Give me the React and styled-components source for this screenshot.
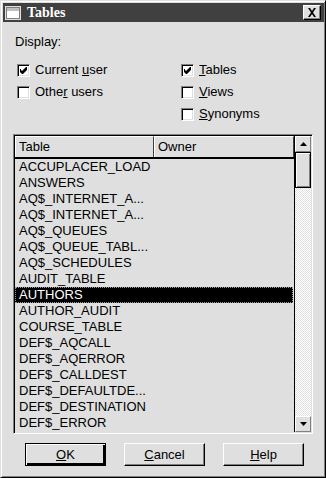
import React from "react";
import styled, { createGlobalStyle } from "styled-components";

const GlobalStyle = createGlobalStyle`
  html, body { margin: 0; padding: 0; background: #dfdfdf; }
  body { font-family: "Liberation Sans", Arial, sans-serif; font-size: 13px; }
  * { box-sizing: border-box; }
`;

const rows = [
  "ACCUPLACER_LOAD", "ANSWERS", "AQ$_INTERNET_A...", "AQ$_INTERNET_A...",
  "AQ$_QUEUES", "AQ$_QUEUE_TABL...", "AQ$_SCHEDULES", "AUDIT_TABLE",
  "AUTHORS", "AUTHOR_AUDIT", "COURSE_TABLE", "DEF$_AQCALL", "DEF$_AQERROR",
  "DEF$_CALLDEST", "DEF$_DEFAULTDE...", "DEF$_DESTINATION", "DEF$_ERROR",
];

function CheckBox({ checked }) {
  return (
    <Box>
      {checked && (
        <svg width="9" height="9" viewBox="0 0 9 9">
          <path d="M1 3v3l2 2h1l4-4V1h-1L3 5 2 4V3z" fill="#000" />
        </svg>
      )}
    </Box>
  );
}

function Arrow({ down }) {
  return (
    <svg width="7" height="4" viewBox="0 0 7 4">
      <path d={down ? "M0 0h7L3.5 4z" : "M3.5 0L7 4H0z"} fill="#000" />
    </svg>
  );
}

export default function App() {
  return (
    <>
      <GlobalStyle />
      <Window>
        <TitleBar>
          <svg width="16" height="14" viewBox="0 0 16 14">
            <rect x="0.5" y="0.5" width="15" height="13" fill="#fff" stroke="#dfdfdf" />
            <rect x="1.5" y="1.5" width="13" height="11" fill="#fff" stroke="#808080" />
            <rect x="2" y="2" width="12" height="3" fill="#c0c0c0" />
          </svg>
          <Title>Tables</Title>
          <CloseButton>
            <svg width="10" height="9" viewBox="0 0 10 9">
              <path d="M1 0h2l2 3 2-3h2L6 4.5 9 9H7L5 6 3 9H1l3-4.5z" fill="#000" />
            </svg>
          </CloseButton>
        </TitleBar>
        <Body>
          <Label>Display:</Label>
          <Options>
            <Option><CheckBox checked /><span>Current <u>u</u>ser</span></Option>
            <Option><CheckBox checked /><span><u>T</u>ables</span></Option>
            <Option><CheckBox /><span>Othe<u>r</u> users</span></Option>
            <Option><CheckBox /><span><u>V</u>iews</span></Option>
            <span />
            <Option><CheckBox /><span><u>S</u>ynonyms</span></Option>
          </Options>
          <ListFrame>
            <ListMain>
              <Header>
                <HeaderCell $width={139}>Table</HeaderCell>
                <HeaderCell $grow>Owner</HeaderCell>
              </Header>
              <Rows>
                {rows.map((r, i) => (
                  <Row key={i} $selected={r === "AUTHORS"}>{r}</Row>
                ))}
              </Rows>
            </ListMain>
            <ScrollBar>
              <ScrollButton><Arrow /></ScrollButton>
              <Thumb />
              <Track />
              <ScrollButton><Arrow down /></ScrollButton>
            </ScrollBar>
          </ListFrame>
          <Buttons>
            <PushButton $default><span><u>O</u>K</span></PushButton>
            <PushButton><span><u>C</u>ancel</span></PushButton>
            <PushButton><span><u>H</u>elp</span></PushButton>
          </Buttons>
        </Body>
      </Window>
    </>
  );
}

const Window = styled.div`
  width: 326px;
  height: 478px;
  background: #dfdfdf;
  border: 1px solid;
  border-color: #dfdfdf #000 #000 #dfdfdf;
  box-shadow: inset 1px 1px #fff, inset -1px -1px #808080;
  padding: 2px 1px 1px 2px;
  display: flex;
  flex-direction: column;
`;

const TitleBar = styled.div`
  height: 19px;
  background: #404040;
  display: flex;
  align-items: center;
  padding: 0 2px 0 2px;
  svg { flex: none; }
`;

const Title = styled.div`
  font-family: "Liberation Serif", "Times New Roman", serif;
  font-weight: bold;
  font-size: 14px;
  color: #fff;
  margin-left: 6px;
  flex: 1;
`;

const CloseButton = styled.div`
  width: 18px;
  height: 15px;
  background: #dfdfdf;
  border: 1px solid;
  border-color: #fff #000 #000 #fff;
  box-shadow: inset -1px -1px #808080;
  display: flex;
  align-items: center;
  justify-content: center;
  margin-right: 1px;
`;

const Body = styled.div`
  flex: 1;
  padding: 12px 10px 0 10px;
  display: flex;
  flex-direction: column;
  color: #000;
`;

const Label = styled.div`
  line-height: 16px;
  padding-left: 2px;
`;

const Options = styled.div`
  display: grid;
  grid-template-columns: 164px 1fr;
  grid-auto-rows: 22px;
  margin-top: 9px;
  padding-left: 4px;
`;

const Option = styled.label`
  display: flex;
  align-items: center;
  gap: 5px;
  line-height: 16px;
  u { text-underline-offset: 1px; }
`;

const Box = styled.span`
  width: 13px;
  height: 13px;
  flex: none;
  background: #fff;
  border: 1px solid;
  border-color: #808080 #fff #fff #808080;
  box-shadow: inset 1px 1px #000, inset -1px -1px #dfdfdf;
  display: flex;
  align-items: center;
  justify-content: center;
`;

const ListFrame = styled.div`
  margin-top: 9px;
  width: 300px;
  height: 300px;
  border: 1px solid;
  border-color: #808080 #fff #fff #808080;
  box-shadow: inset 1px 1px #000, inset -1px -1px #dfdfdf;
  padding: 1px;
  display: flex;
`;

const ListMain = styled.div`
  flex: 1;
  display: flex;
  flex-direction: column;
  overflow: hidden;
`;

const Header = styled.div`
  display: flex;
  height: 23px;
  border-bottom: 2px solid #000;
`;

const HeaderCell = styled.div`
  width: ${(p) => (p.$width ? `${p.$width}px` : "auto")};
  flex: ${(p) => (p.$grow ? 1 : "none")};
  background: #dfdfdf;
  border-top: 1px solid #fff;
  border-left: 1px solid #fff;
  border-right: 1px solid #404040;
  padding-left: 3px;
  line-height: 20px;
`;

const Rows = styled.div`
  display: flex;
  flex-direction: column;
`;

const Row = styled.div`
  height: 16px;
  line-height: 16px;
  padding-left: 4px;
  margin-right: 1px;
  white-space: nowrap;
  background: ${(p) => (p.$selected ? "#000" : "transparent")};
  color: ${(p) => (p.$selected ? "#fff" : "#000")};
  outline: ${(p) => (p.$selected ? "1px dotted #9a9a9a" : "none")};
  outline-offset: -1px;
`;

const ScrollBar = styled.div`
  width: 17px;
  flex: none;
  border-left: 1px solid #000;
  display: flex;
  flex-direction: column;
`;

const ScrollButton = styled.div`
  height: 16px;
  flex: none;
  background: #dfdfdf;
  border: 1px solid;
  border-color: #fff #808080 #808080 #fff;
  display: flex;
  align-items: center;
  justify-content: center;
`;

const Thumb = styled.div`
  height: 36px;
  flex: none;
  background: #dfdfdf;
  border: 1px solid #000;
  box-shadow: inset 1px 1px #fff, inset -1px -1px #808080;
`;

const Track = styled.div`
  flex: 1;
  background: repeating-conic-gradient(#dfdfdf 0 25%, #fff 0 50%) 0 0 / 2px 2px;
`;

const Buttons = styled.div`
  display: flex;
  gap: 18px;
  padding-left: 12px;
  margin-top: 9px;
`;

const PushButton = styled.div`
  width: 81px;
  height: 23px;
  background: #dfdfdf;
  border: 1px solid;
  border-color: ${(p) => (p.$default ? "#000" : "#fff #000 #000 #fff")};
  box-shadow: ${(p) =>
    p.$default
      ? "inset 1px 1px #fff, inset -2px -2px #000"
      : "inset -1px -1px #808080"};
  display: flex;
  align-items: center;
  justify-content: center;
  line-height: 16px;
  u { text-underline-offset: 1px; }
`;
